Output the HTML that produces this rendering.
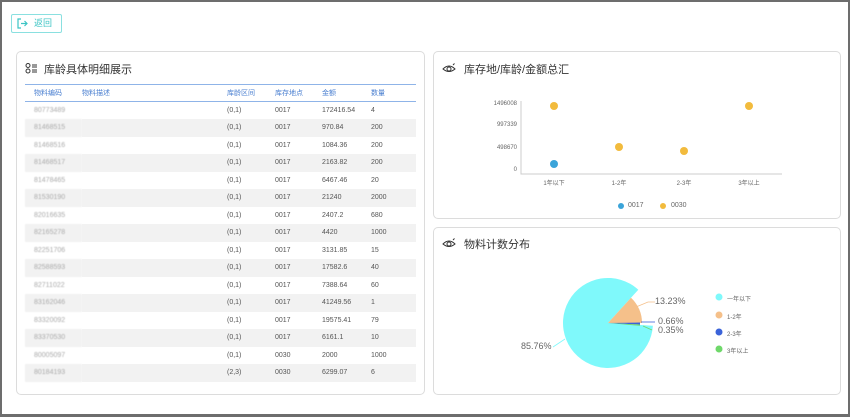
<!DOCTYPE html>
<html><head><meta charset="utf-8"><style>
*{margin:0;padding:0;box-sizing:border-box}
body{width:850px;height:417px;overflow:hidden;background:#fff;font-family:"Liberation Sans","Noto Sans CJK SC",sans-serif;position:relative}
.frame{position:absolute;left:0;top:0;width:850px;height:417px;border:2px solid #6d6d6d;border-bottom-width:3px}
.btn{position:absolute;left:11px;top:14px;width:51px;height:19px;border:1px solid #8ae0e0;border-radius:2px;color:#3cc4c4;font-size:9px;line-height:17px;padding-left:22px}
.card{position:absolute;background:#fff;border:1px solid #dcdcdc;border-radius:5px}
.title{position:absolute;font-size:11px;color:#333}
table{position:absolute;left:8px;top:32px;width:391px;border-collapse:collapse;font-size:7px;color:#555;table-layout:fixed}
th{color:#4a7fd0;font-weight:normal;text-align:left;height:17px;border-top:1px solid #8fb4e8;border-bottom:1px solid #8fb4e8}
td{height:17.5px}
tr:nth-child(odd) td{background:#f2f2f2}
td.b{color:#aaa;filter:blur(0.6px);padding-left:9px}
.ax{position:absolute;font-size:6px;color:#666;z-index:3}
svg.top{position:absolute;left:0;top:0;z-index:2}
</style></head><body>
<div class="frame"></div>
<div class="btn"><svg style="position:absolute;left:5px;top:3px" width="11" height="11" viewBox="0 0 11 11" fill="none" stroke="#3cc4c4" stroke-width="1.2"><path d="M4 1H1v9h3M4 5.5h6M7.5 3l2.5 2.5L7.5 8"/></svg>返回</div>

<div class="card" style="left:16px;top:51px;width:409px;height:344px">
<svg style="position:absolute;left:8px;top:11px" width="12" height="11" viewBox="0 0 12 11" fill="none" stroke="#333" stroke-width="1"><circle cx="3" cy="2.5" r="2"/><circle cx="3" cy="8" r="2"/><path d="M7 2h5M7 4h5M7 7h5M7 9h5"/></svg>
<div class="title" style="left:27px;top:9px">库龄具体明细展示</div>
<table>
<colgroup><col style="width:57px"><col style="width:145px"><col style="width:48px"><col style="width:47px"><col style="width:49px"><col></colgroup>
<tr><th style="padding-left:9px">物料编码</th><th>物料描述</th><th>库龄区间</th><th>库存地点</th><th>金额</th><th>数量</th></tr>
<tr><td class="b">80773489</td><td></td><td>(0,1)</td><td>0017</td><td>172416.54</td><td>4</td></tr>
<tr><td class="b">81468515</td><td></td><td>(0,1)</td><td>0017</td><td>970.84</td><td>200</td></tr>
<tr><td class="b">81468516</td><td></td><td>(0,1)</td><td>0017</td><td>1084.36</td><td>200</td></tr>
<tr><td class="b">81468517</td><td></td><td>(0,1)</td><td>0017</td><td>2163.82</td><td>200</td></tr>
<tr><td class="b">81478465</td><td></td><td>(0,1)</td><td>0017</td><td>6467.46</td><td>20</td></tr>
<tr><td class="b">81530190</td><td></td><td>(0,1)</td><td>0017</td><td>21240</td><td>2000</td></tr>
<tr><td class="b">82016635</td><td></td><td>(0,1)</td><td>0017</td><td>2407.2</td><td>680</td></tr>
<tr><td class="b">82165278</td><td></td><td>(0,1)</td><td>0017</td><td>4420</td><td>1000</td></tr>
<tr><td class="b">82251706</td><td></td><td>(0,1)</td><td>0017</td><td>3131.85</td><td>15</td></tr>
<tr><td class="b">82588593</td><td></td><td>(0,1)</td><td>0017</td><td>17582.6</td><td>40</td></tr>
<tr><td class="b">82711022</td><td></td><td>(0,1)</td><td>0017</td><td>7388.64</td><td>60</td></tr>
<tr><td class="b">83162046</td><td></td><td>(0,1)</td><td>0017</td><td>41249.56</td><td>1</td></tr>
<tr><td class="b">83320092</td><td></td><td>(0,1)</td><td>0017</td><td>19575.41</td><td>79</td></tr>
<tr><td class="b">83370530</td><td></td><td>(0,1)</td><td>0017</td><td>6161.1</td><td>10</td></tr>
<tr><td class="b">80005097</td><td></td><td>(0,1)</td><td>0030</td><td>2000</td><td>1000</td></tr>
<tr><td class="b">80184193</td><td></td><td>(2,3)</td><td>0030</td><td>6299.07</td><td>6</td></tr>
</table>
</div>

<div class="card" style="left:433px;top:51px;width:408px;height:168px">
<svg style="position:absolute;left:8px;top:11px" width="14" height="11" viewBox="0 0 14 11" fill="none" stroke="#333" stroke-width="1"><path d="M1 6Q7 0 13 6Q7 11 1 6Z"/><circle cx="7" cy="6" r="2"/><path d="M11 2l1.5-1.5"/></svg>
<div class="title" style="left:30px;top:9px">库存地/库龄/金额总汇</div>
</div>
<div class="card" style="left:433px;top:227px;width:408px;height:168px">
<svg style="position:absolute;left:8px;top:10px" width="14" height="11" viewBox="0 0 14 11" fill="none" stroke="#333" stroke-width="1"><path d="M1 6Q7 0 13 6Q7 11 1 6Z"/><circle cx="7" cy="6" r="2"/><path d="M11 2l1.5-1.5"/></svg>
<div class="title" style="left:30px;top:8px">物料计数分布</div>
</div>

<svg class="top" width="850" height="417">
<path d="M521 101V174H782" stroke="#ccc" fill="none"/>
<circle cx="554" cy="164" r="4" fill="#3ba4d9"/>
<circle cx="554" cy="106" r="4" fill="#f2bb3d"/>
<circle cx="619" cy="147" r="4" fill="#f2bb3d"/>
<circle cx="684" cy="151" r="4" fill="#f2bb3d"/>
<circle cx="749" cy="106" r="4" fill="#f2bb3d"/>
<circle cx="621" cy="206" r="3" fill="#3ba4d9"/>
<circle cx="663" cy="206" r="3" fill="#f2bb3d"/>
<path d="M608 323L652.9 325.8A45 45 0 1 1 638.3 289.7Z" fill="#7ff9fb"/>
<path d="M608 323L631 297.7A34 34 0 0 1 642 323Z" fill="#f5c08a"/>
<path d="M608 323L640 322.5L640 324.5Z" fill="#3b63d9"/>
<path d="M608 323L640 324.5L640 325.8Z" fill="#6fd86a"/>
<path d="M636 307L648 302H655" stroke="#f5c08a" fill="none" stroke-width=".8"/>
<path d="M641 322H655" stroke="#3b63d9" stroke-width=".8"/>
<path d="M643 326L652 330" stroke="#6fd86a" stroke-width=".8"/>
<path d="M565 339L553 347" stroke="#7ff9fb" stroke-width=".8"/>
<circle cx="719" cy="297" r="3.5" fill="#7ff9fb"/>
<circle cx="719" cy="315" r="3.5" fill="#f5c08a"/>
<circle cx="719" cy="332" r="3.5" fill="#3b63d9"/>
<circle cx="719" cy="349" r="3.5" fill="#6fd86a"/>
</svg>
<div class="ax" style="left:485px;top:101px;width:32px;text-align:right">1496008</div>
<div class="ax" style="left:485px;top:122px;width:32px;text-align:right">997339</div>
<div class="ax" style="left:485px;top:145px;width:32px;text-align:right">498670</div>
<div class="ax" style="left:485px;top:167px;width:32px;text-align:right">0</div>
<div class="ax" style="left:539px;top:178px;width:30px;text-align:center">1年以下</div>
<div class="ax" style="left:604px;top:178px;width:30px;text-align:center">1-2年</div>
<div class="ax" style="left:669px;top:178px;width:30px;text-align:center">2-3年</div>
<div class="ax" style="left:734px;top:178px;width:30px;text-align:center">3年以上</div>
<div class="ax" style="left:628px;top:202px;font-size:7px">0017</div>
<div class="ax" style="left:671px;top:202px;font-size:7px">0030</div>
<div class="ax" style="left:655px;top:296px;font-size:9px">13.23%</div>
<div class="ax" style="left:658px;top:316px;font-size:9px">0.66%</div>
<div class="ax" style="left:658px;top:325px;font-size:9px">0.35%</div>
<div class="ax" style="left:521px;top:341px;font-size:9px">85.76%</div>
<div class="ax" style="left:727px;top:294px">一年以下</div>
<div class="ax" style="left:727px;top:312px">1-2年</div>
<div class="ax" style="left:727px;top:329px">2-3年</div>
<div class="ax" style="left:727px;top:346px">3年以上</div>
</body></html>
